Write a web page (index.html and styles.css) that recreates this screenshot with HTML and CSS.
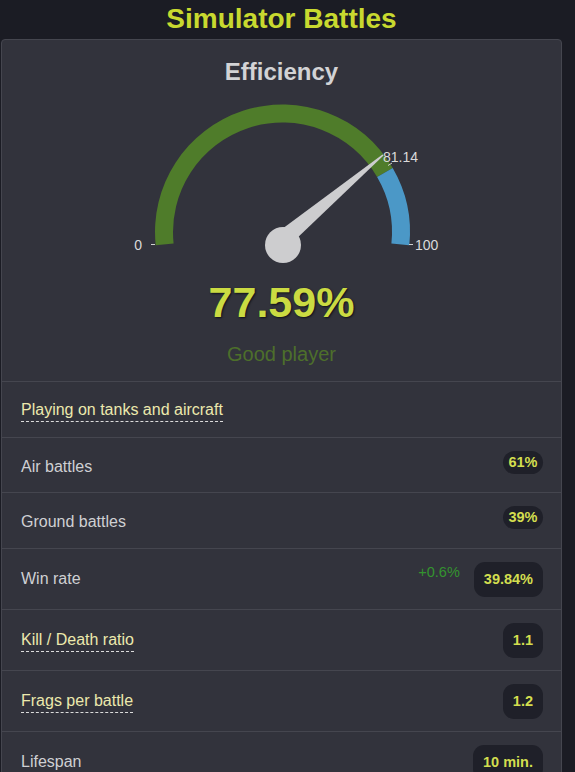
FILE: index.html
```html
<!DOCTYPE html>
<html lang="en">
<head>
<meta charset="utf-8">
<title>Simulator Battles</title>
<link rel="stylesheet" href="styles.css">
</head>
<body>
<div class="page">
  <h1 class="title">Simulator Battles</h1>
  <div class="card">
    <div class="eff">
      <div class="eff-title">Efficiency</div>
      <svg class="gauge" width="559" height="192" viewBox="0 0 559 192">
        <path class="band-green" d="M 153.7 159.3 A 127.5 127.5 0 0 1 390.7 81.9 L 375.1 90.9 A 109.5 109.5 0 0 0 171.6 157.4 Z"/>
        <path class="band-blue" d="M 390.7 81.9 A 127.5 127.5 0 0 1 407.3 159.3 L 389.4 157.4 A 109.5 109.5 0 0 0 375.1 90.9 Z"/>
        <line class="tick" x1="149" y1="158.5" x2="153" y2="158.5"/>
        <line class="tick" x1="407" y1="158.5" x2="411" y2="158.5"/>
        <line class="tick" x1="386" y1="79.5" x2="390" y2="77"/>
        <text class="glabel" x="140" y="164" text-anchor="end">0</text>
        <text class="glabel" x="413" y="164">100</text>
        <text class="glabel" x="381" y="75.7">81.14</text>
        <polygon class="needle" points="276,146 380.5,68.5 381.5,69.5 292,155"/>
        <circle class="needle" cx="281" cy="159" r="18"/>
      </svg>
      <div class="eff-value">77.59%</div>
      <div class="eff-rank">Good player</div>
    </div>
    <div class="row">
      <span class="label link">Playing on tanks and aircraft</span>
    </div>
    <div class="row tight">
      <span class="label low">Air battles</span>
      <span class="badge small">61%</span>
    </div>
    <div class="row">
      <span class="label low">Ground battles</span>
      <span class="badge small">39%</span>
    </div>
    <div class="row big">
      <span class="label">Win rate</span>
      <span class="val">
        <span class="delta">+0.6%</span>
        <span class="badge large">39.84%</span>
      </span>
    </div>
    <div class="row big">
      <span class="label link">Kill / Death ratio</span>
      <span class="badge large">1.1</span>
    </div>
    <div class="row big">
      <span class="label link">Frags per battle</span>
      <span class="badge large">1.2</span>
    </div>
    <div class="row big">
      <span class="label">Lifespan</span>
      <span class="badge large">10 min.</span>
    </div>
  </div>
</div>
</body>
</html>
```

FILE: styles.css
```css
html, body {
  margin: 0;
  padding: 0;
  background: #1b1c24;
}

body {
  font-family: "Liberation Sans", Arial, sans-serif;
  overflow: hidden;
}

.page {
  width: 561px;
  margin-left: 1px;
}

.title {
  margin: 0 0 4px 0;
  padding-top: 3px;
  font-size: 28px;
  line-height: 32px;
  font-weight: bold;
  text-align: center;
  color: #c8d92f;
}

.card {
  background: #32333c;
  border: 1px solid #45464f;
  border-radius: 4px;
}

.eff {
  text-align: center;
  padding-bottom: 15px;
}

.eff-title {
  padding-top: 18px;
  font-size: 24px;
  line-height: 28px;
  font-weight: bold;
  color: #d3d3d5;
}

.gauge {
  display: block;
}

.band-green {
  fill: #4f7c2a;
}

.band-blue {
  fill: #4b98c7;
}

.tick {
  stroke: #d0d0d0;
  stroke-width: 1;
}

.glabel {
  fill: #dadada;
  font-family: "Liberation Sans", Arial, sans-serif;
  font-size: 14px;
}

.needle {
  fill: #cdcdcf;
}

.eff-value {
  font-size: 43px;
  line-height: 48px;
  font-weight: bold;
  color: #cbdb42;
  text-shadow: 1px 1px 2px #111218;
}

.eff-rank {
  margin-top: 16px;
  font-size: 20px;
  line-height: 24px;
  color: #4d6f2b;
}

.row {
  display: flex;
  align-items: center;
  justify-content: space-between;
  box-sizing: border-box;
  height: 56px;
  padding: 0 18px 0 19px;
  border-top: 1px solid #45464f;
}

.row.tight {
  height: 55px;
}

.row.big {
  height: 61px;
}

.label {
  font-size: 16px;
  color: #cfd0d3;
}

.label.low {
  margin-top: 3px;
}

.label.link {
  color: #ece9ad;
  border-bottom: 1px dashed #dcdcdc;
  padding-bottom: 2px;
  margin-top: 3px;
}

.val {
  display: flex;
  align-items: flex-start;
  gap: 14px;
}

.delta {
  margin-top: 2px;
  font-size: 14.5px;
  line-height: 17px;
  color: #34932f;
}

.badge {
  background: #1f2029;
  color: #d3de4f;
  font-weight: bold;
  font-size: 14.5px;
  line-height: 17px;
}

.badge.small {
  padding: 3px 5.5px;
  border-radius: 12px;
  margin-bottom: 6px;
}

.badge.large {
  padding: 9px 10px;
  border-radius: 11px;
}
```
